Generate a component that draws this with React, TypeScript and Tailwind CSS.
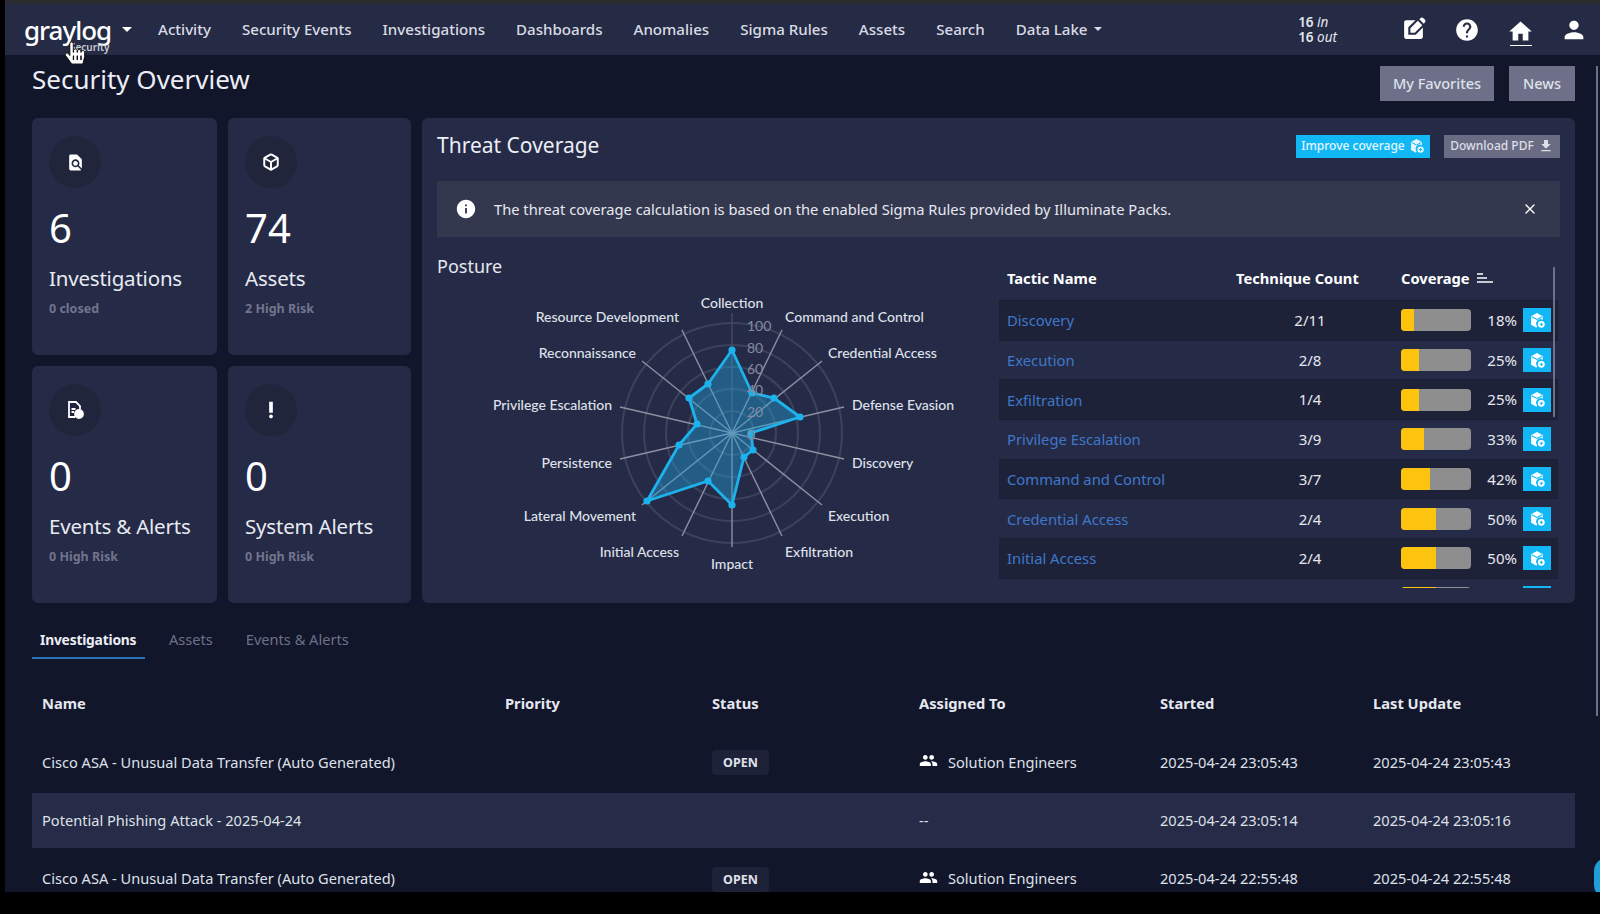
import { Box, X } from 'lucide-react'
import { FaHandPointer } from 'react-icons/fa'
import { MdDownload, MdEditSquare, MdFindInPage, MdGroup, MdHelp, MdHome, MdInfo, MdPerson, MdPriorityHigh } from 'react-icons/md'

const NAV = ['Activity', 'Security Events', 'Investigations', 'Dashboards', 'Anomalies', 'Sigma Rules', 'Assets', 'Search']

const TACTICS = [
  { name: 'Discovery', count: '2/11', pct: 18 },
  { name: 'Execution', count: '2/8', pct: 25 },
  { name: 'Exfiltration', count: '1/4', pct: 25 },
  { name: 'Privilege Escalation', count: '3/9', pct: 33 },
  { name: 'Command and Control', count: '3/7', pct: 42 },
  { name: 'Credential Access', count: '2/4', pct: 50 },
  { name: 'Initial Access', count: '2/4', pct: 50 },
  { name: '', count: '', pct: 50 },
]

const ROWS = [
  { name: 'Cisco ASA - Unusual Data Transfer (Auto Generated)', open: true, who: 'Solution Engineers', started: '2025-04-24 23:05:43', updated: '2025-04-24 23:05:43', h: 'h-[61px]' },
  { name: 'Potential Phishing Attack - 2025-04-24', open: false, who: '--', started: '2025-04-24 23:05:14', updated: '2025-04-24 23:05:16', h: 'h-[55px] bg-[#262b47]' },
  { name: 'Cisco ASA - Unusual Data Transfer (Auto Generated)', open: true, who: 'Solution Engineers', started: '2025-04-24 22:55:48', updated: '2025-04-24 22:55:48', h: 'h-[62px]' },
]

// radar coordinates are page pixels, the svg viewBox starts at the chart's corner
const CX = 733
const CY = 433
const SPOKES = [
  [733, 313], [783, 330], [823, 361], [845, 407], [845, 459], [823, 505], [783, 536],
  [733, 547], [683, 536], [643, 505], [621, 459], [621, 407], [643, 361], [683, 330],
]
const POINTS = [
  [733, 350], [753, 393], [775, 398], [801, 417], [752, 433], [754, 450], [745, 457],
  [733, 505], [709, 481], [648, 501], [680, 445], [698, 424], [690, 398], [709, 384],
]
const LABELS: { t: string; x: number; y: number; a: 'start' | 'middle' | 'end' }[] = [
  { t: 'Collection', x: 733, y: 302, a: 'middle' },
  { t: 'Command and Control', x: 786, y: 316, a: 'start' },
  { t: 'Credential Access', x: 829, y: 352, a: 'start' },
  { t: 'Defense Evasion', x: 853, y: 404, a: 'start' },
  { t: 'Discovery', x: 853, y: 462, a: 'start' },
  { t: 'Execution', x: 829, y: 515, a: 'start' },
  { t: 'Exfiltration', x: 786, y: 551, a: 'start' },
  { t: 'Impact', x: 733, y: 563, a: 'middle' },
  { t: 'Initial Access', x: 680, y: 551, a: 'end' },
  { t: 'Lateral Movement', x: 637, y: 515, a: 'end' },
  { t: 'Persistence', x: 613, y: 462, a: 'end' },
  { t: 'Privilege Escalation', x: 613, y: 404, a: 'end' },
  { t: 'Reconnaissance', x: 637, y: 352, a: 'end' },
  { t: 'Resource Development', x: 680, y: 316, a: 'end' },
]
const TICKS = [
  ['100', 325], ['80', 347], ['60', 368], ['40', 389], ['20', 411], ['0', 434],
] as const

function CubeBadge({ className }: { className: string }) {
  return (
    <svg viewBox="0 0 16 16" className={className} fill="currentColor">
      <path d="M7.5 1 13 4v3.2A4.2 4.2 0 0 0 7.6 13.4L7 14.8 2 12V4z" />
      <path d="M2.6 4.4 7.5 7l4.9-2.6" fill="none" stroke="#12b8f5" strokeWidth="1" />
      <circle cx="11.6" cy="11.6" r="3.2" />
      <path d="M11.6 10v3.2M10 11.6h3.2" stroke="#12b8f5" strokeWidth="1" />
    </svg>
  )
}

function Radar() {
  return (
    <svg viewBox="438 280 561 320" className="absolute left-0 top-[43px] h-[320px] w-[561px]">
      {[22, 44, 66, 88, 110].map(r => (
        <circle key={r} cx={CX} cy={CY} r={r} fill="none" stroke="#3d425c" strokeWidth="2" />
      ))}
      {SPOKES.map(([x, y], i) => (
        <line key={i} x1={CX} y1={CY} x2={x} y2={y} stroke={i === 0 ? '#454a63' : '#8d90a1'} strokeWidth="1.4" />
      ))}
      <polygon points={POINTS.map(p => p.join(',')).join(' ')} fill="#22a5dc" fillOpacity="0.42" stroke="#1cb3ec" strokeWidth="2.8" strokeLinejoin="round" />
      {POINTS.map(([x, y], i) => (
        <circle key={i} cx={x} cy={y} r="3.6" fill="#1cb3ec" />
      ))}
      {TICKS.map(([t, y]) => (
        <text key={t} x={748} y={y} dominantBaseline="central" fill="#858aa0" fontSize="14" fontFamily="Lato, sans-serif">{t}</text>
      ))}
      {LABELS.map(l => (
        <text key={l.t} x={l.x} y={l.y} textAnchor={l.a} dominantBaseline="central" fill="#dfe1ea" fontSize="14" fontWeight="500" fontFamily="Lato, sans-serif">{l.t}</text>
      ))}
    </svg>
  )
}

function StatCard({ icon, value, title, sub }: { icon: React.ReactNode; value: string; title: string; sub: string }) {
  return (
    <div className="flex h-[237px] flex-col rounded-md bg-[#252a47] pl-[17px] pt-[18px]">
      <div className="flex h-[52px] w-[52px] items-center justify-center rounded-full bg-[#21253b] text-white">{icon}</div>
      <div className="mt-[15px] h-[50px] font-['Inter',sans-serif] text-[40px] font-normal leading-[50px] text-white">{value}</div>
      <div className="mt-[10px] font-['Inter',sans-serif] text-[20.5px] leading-[30px] tracking-[-0.2px] text-[#e8eaf2]">{title}</div>
      <div className="mt-[7px] font-['Lato',sans-serif] text-[12.5px] font-bold leading-[18px] text-[#71758c]">{sub}</div>
    </div>
  )
}

function TacticRow({ t, odd }: { t: (typeof TACTICS)[number]; odd: boolean }) {
  return (
    <div className={`grid h-[39.7px] grid-cols-[237px_165px_1fr] items-center border-b border-[#1a1e33] ${odd ? 'bg-[#1e2239]' : 'bg-[#252a47]'}`}>
      <a className="pl-[8px] text-[14.8px] text-[#3f78c9]">{t.name}</a>
      <span className="w-[148px] text-center text-[15px] text-[#e6e8ef]">{t.count}</span>
      <div className="flex items-center">
        <div className="h-[22px] w-[70px] overflow-hidden rounded-[4px] bg-[#8e8e8e]">
          <div className="h-full bg-[#fdc40f]" style={{ width: `${t.pct}%` }} />
        </div>
        <span className="w-[46px] text-right text-[15px] text-[#e6e8ef]">{t.pct}%</span>
        <div className="ml-[6px] flex h-[24px] w-[28px] items-center justify-center bg-[#12b8f5] text-white">
          <CubeBadge className="h-[17px] w-[17px]" />
        </div>
      </div>
    </div>
  )
}

export default function App() {
  return (
    <div className="flex h-[914px] flex-col overflow-hidden bg-black font-['Lato',sans-serif]">
      <div className="flex h-[892px] overflow-hidden">
        <div className="w-[5px] shrink-0 bg-black" />
        <div className="relative flex min-w-0 flex-1 flex-col bg-[#12162b]">
          <div className="h-[4px] shrink-0 bg-[#2b2c30]" />
          <nav className="flex h-[51px] shrink-0 items-center bg-[#252b45] font-['Inter',sans-serif] text-[15.1px] font-medium text-[#d9dbe4]">
            <div className="relative ml-[19px] w-[86px] text-white">
              <div className="text-[26px] leading-[30px] tracking-[-1px]">graylog</div>
              <div className="absolute left-[46px] top-[26px] text-[10px] font-semibold leading-[12px] text-[#c9cbd6]">Security</div>
            </div>
            <div className="ml-[12px] h-0 w-0 border-x-[5px] border-t-[5px] border-x-transparent border-t-white" />
            <div className="ml-[26px] flex items-center gap-[31px]">
              {NAV.map(n => (
                <span key={n}>{n}</span>
              ))}
              <span className="flex items-center gap-[6px]">
                Data Lake
                <span className="h-0 w-0 border-x-[4px] border-t-[4px] border-x-transparent border-t-[#d9dbe4]" />
              </span>
            </div>
            <div className="ml-auto mr-[12px] flex items-center">
              <div className="mr-[64px] text-[13.5px] font-semibold leading-[15px] text-[#e4e6ee]">
                <div>16 <i className="font-normal">in</i></div>
                <div>16 <i className="font-normal">out</i></div>
              </div>
              <MdEditSquare size={25} className="text-white" />
              <MdHelp size={26} className="ml-[28px] text-white" />
              <div className="ml-[27px] flex h-[51px] flex-col items-center justify-center">
                <MdHome size={27} className="mt-[5px] text-white" />
                <div className="h-px w-[22px] bg-white" />
              </div>
              <MdPerson size={28} className="ml-[26px] text-white" />
            </div>
          </nav>

          <FaHandPointer size={22} className="absolute left-[59px] top-[42px] text-white [stroke:#000] [stroke-width:20px]" />

          <div className="min-h-0 flex-1 pl-[27px] pr-[25px]">
            <div className="flex h-[63px] items-start justify-between">
              <h1 className="mt-[7px] font-['Inter',sans-serif] text-[26px] leading-[34px] text-[#eceef5]">Security Overview</h1>
              <div className="mt-[11px] flex gap-[15px] text-[14.5px] font-medium text-[#dfe1e9]">
                <button className="h-[35px] w-[114px] bg-[#6d7088]">My Favorites</button>
                <button className="h-[35px] w-[66px] bg-[#6d7088]">News</button>
              </div>
            </div>

            <div className="flex h-[485px] gap-[11px]">
              <div className="grid w-[379px] shrink-0 grid-cols-[185px_183px] gap-x-[11px] gap-y-[11px]">
                <StatCard icon={<MdFindInPage size={19} />} value="6" title="Investigations" sub="0 closed" />
                <StatCard icon={<Box size={18} strokeWidth={2.6} />} value="74" title="Assets" sub="2 High Risk" />
                <StatCard
                  icon={
                    <svg viewBox="0 0 20 20" className="h-[20px] w-[20px]" fill="none" stroke="currentColor" strokeWidth="1.8">
                      <path d="M10 17H4V2h7l4 4v3M6.500 9h4M6.500 12h2.500" />
                      <circle cx="14" cy="14" r="4" fill="currentColor" />
                    </svg>
                  }
                  value="0"
                  title="Events & Alerts"
                  sub="0 High Risk"
                />
                <StatCard icon={<MdPriorityHigh size={22} />} value="0" title="System Alerts" sub="0 High Risk" />
              </div>

              <div className="min-w-0 flex-1 rounded-md bg-[#252a47] px-[15px]">
                <div className="flex h-[63px] items-center justify-between pb-[7px]">
                  <h2 className="font-['Inter',sans-serif] text-[21px] text-[#eceef5]">Threat Coverage</h2>
                  <div className="flex gap-[14px] text-[12px] font-medium">
                    <button className="flex h-[23px] w-[134px] items-center justify-center gap-[4px] bg-[#12b8f5] text-[#e4f6fe]">
                      Improve coverage <CubeBadge className="h-[16px] w-[16px]" />
                    </button>
                    <button className="flex h-[23px] w-[116px] items-center justify-center gap-[4px] bg-[#696c83] text-[#dddfe7]">
                      Download PDF <MdDownload size={16} />
                    </button>
                  </div>
                </div>
                <div className="flex h-[56px] items-center bg-[#34384f] pl-[18px] pr-[22px] text-[14.7px] text-[#e6e8ef]">
                  <MdInfo size={22} className="text-white" />
                  <span className="ml-[17px] flex-1">The threat coverage calculation is based on the enabled Sigma Rules provided by Illuminate Packs.</span>
                  <X size={16} className="text-white" />
                </div>
                <div className="flex">
                  <div className="relative h-[366px] w-[562px] shrink-0">
                    <h3 className="pt-[15px] font-['Inter',sans-serif] text-[18px] leading-[28px] text-[#e6e8ef]">Posture</h3>
                    <Radar />
                  </div>
                  <div className="relative mt-[30px] h-[321px] w-[559px] overflow-hidden">
                    <div className="grid h-[34px] grid-cols-[237px_165px_1fr] items-center border-b border-[#1a1e33] pb-[10px] text-[14.7px] font-bold text-white">
                      <span className="pl-[8px]">Tactic Name</span>
                      <span>Technique Count</span>
                      <span className="flex items-center gap-[7px]">
                        Coverage
                        <svg viewBox="0 0 16 12" className="h-[12px] w-[16px]" stroke="currentColor" strokeWidth="1.6">
                          <path d="M0 2h6M0 6h10M0 10h16" />
                        </svg>
                      </span>
                    </div>
                    {TACTICS.map((t, i) => (
                      <TacticRow key={i} t={t} odd={i % 2 === 0} />
                    ))}
                    <div className="absolute right-[3px] top-0 h-[150px] w-[2px] bg-[#6d7088]" />
                  </div>
                </div>
              </div>
            </div>

            <div className="mt-[18px] flex h-[38px] items-start text-[14.6px]">
              <div className="h-[38px] w-[113px] border-b-2 border-[#2d6fb8] pl-[8px] pt-[9px] text-[13.8px] font-bold tracking-[-0.2px] text-[#eceef5]">Investigations</div>
              <div className="ml-[24px] pt-[8px] text-[#6d7188]">Assets</div>
              <div className="ml-[33px] pt-[8px] text-[#6d7188]">Events &amp; Alerts</div>
            </div>

            <div className="grid h-[73px] grid-cols-[463px_207px_207px_241px_213px_1fr] items-center pl-[10px] pt-[16px] text-[14.7px] font-bold text-[#e6e8ef]">
              <span>Name</span>
              <span>Priority</span>
              <span>Status</span>
              <span>Assigned To</span>
              <span>Started</span>
              <span>Last Update</span>
            </div>
            {ROWS.map((r, i) => (
              <div key={i} className={`grid grid-cols-[463px_207px_207px_241px_213px_1fr] items-center pl-[10px] text-[14.6px] text-[#dfe1e9] ${r.h}`}>
                <span className="whitespace-nowrap">{r.name}</span>
                <span />
                <span>
                  {r.open && <span className="inline-block h-[25px] w-[57px] rounded-[4px] bg-[#1e2238] text-center text-[12.5px] font-bold leading-[25px] text-[#dfe1e9]">OPEN</span>}
                </span>
                <span className="flex items-center">
                  {r.open && <MdGroup size={19} className="mb-[4px] mr-[10px] text-white" />}
                  {r.who}
                </span>
                <span>{r.started}</span>
                <span>{r.updated}</span>
              </div>
            ))}
          </div>

          <div className="absolute right-[2px] top-[66px] h-[650px] w-[2px] bg-[#6d7088]" />
          <div className="absolute right-[-20px] top-[858px] h-[40px] w-[26px] rounded-full bg-[#1f9fd6]" />
        </div>
      </div>
    </div>
  )
}
